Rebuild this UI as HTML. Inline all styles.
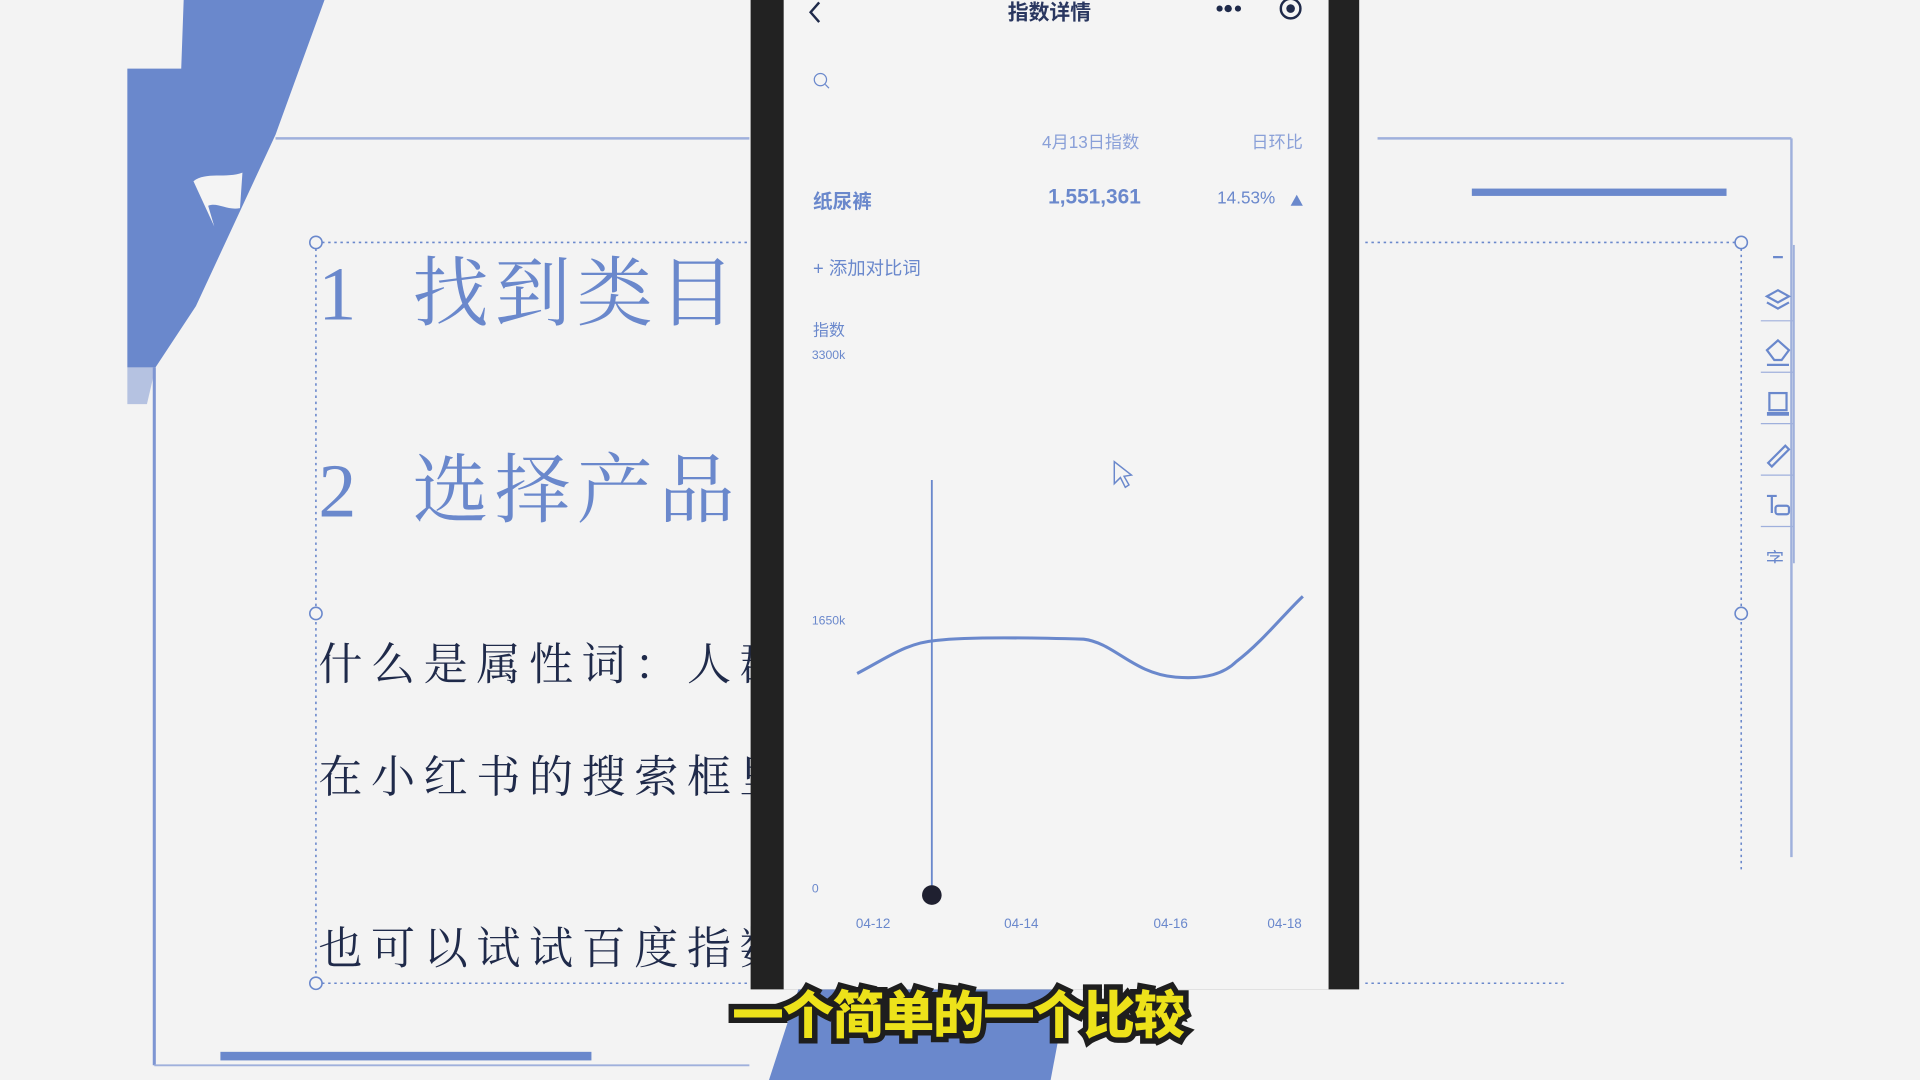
<!DOCTYPE html>
<html><head><meta charset="utf-8"><style>
html,body{margin:0;padding:0;width:1920px;height:1080px;overflow:hidden;background:#f3f3f3}
#w{position:absolute;left:0;top:0;width:1568px;height:882px;transform:scale(1.22449);transform-origin:0 0}
.t{position:absolute;white-space:nowrap;font-family:"Liberation Sans","Noto Sans CJK SC",sans-serif}
.big{font-family:"Liberation Serif","Noto Serif CJK SC",serif;color:#6a88cc;font-size:62px;letter-spacing:5px}
.mid{font-family:"Liberation Serif","Noto Serif CJK SC",serif;color:#1f2a4a;font-size:36px;letter-spacing:7px}
.ph{color:#6a88cc}
</style></head><body>
<div id="w">
<svg width="1568" height="882" style="position:absolute;left:0;top:0">
  <polygon points="150,0 265,0 225,110 160,250 127,300 104,300 104,56 148,56" fill="#6a88cc"/>
  <polygon points="104,300 127,300 120,330 104,330" fill="#6a88cc" opacity="0.45"/>
  <path d="M158,148 C168,140 185,146 198,141 L196,170 C185,172 178,165 170,168 L175,185 Z" fill="#f4f4f4"/>
  <line x1="225" y1="113" x2="612" y2="113" stroke="#9fb0dc" stroke-width="2"/>
  <line x1="126" y1="300" x2="126" y2="870" stroke="#7d95d2" stroke-width="2.5"/>
  <line x1="126" y1="870" x2="612" y2="870" stroke="#9fb0dc" stroke-width="1.5"/>
  <rect x="180" y="859" width="303" height="7" fill="#6a88cc"/>
  <line x1="1125" y1="113" x2="1463" y2="113" stroke="#9fb0dc" stroke-width="2"/>
  <line x1="1463" y1="113" x2="1463" y2="700" stroke="#9fb0dc" stroke-width="2"/>
  <rect x="1202" y="154" width="208" height="6" fill="#6a88cc"/>
  <g stroke="#6a88cc" stroke-width="1.3" stroke-dasharray="2,3" fill="none">
    <line x1="258" y1="198" x2="612" y2="198"/>
    <line x1="258" y1="198" x2="258" y2="803"/>
    <line x1="258" y1="803" x2="612" y2="803"/>
    <line x1="1115" y1="198" x2="1422" y2="198"/>
    <line x1="1422" y1="198" x2="1422" y2="710"/>
    <line x1="1115" y1="803" x2="1278" y2="803"/>
  </g>
  <g fill="#f4f4f4" stroke="#6a88cc" stroke-width="1.3">
    <circle cx="258" cy="198" r="5"/><circle cx="258" cy="501" r="5"/><circle cx="258" cy="803" r="5"/>
    <circle cx="1422" cy="198" r="5"/><circle cx="1422" cy="501" r="5"/>
  </g>
  <polygon points="652,808 872,808 858,882 628,882" fill="#6a88cc"/>
</svg>

<div class="t big" style="left:260px;top:190px">1&nbsp; 找到类目</div>
<div class="t big" style="left:260px;top:351px">2&nbsp; 选择产品</div>
<div class="t mid" style="left:260px;top:515px">什么是属性词：人群</div>
<div class="t mid" style="left:260px;top:607px">在小红书的搜索框里</div>
<div class="t mid" style="left:260px;top:747px">也可以试试百度指数</div>

<svg width="40" height="260" style="position:absolute;left:1435px;top:200px" fill="none" stroke="#6a88cc" stroke-width="1.8">
  <line x1="13" y1="10" x2="21" y2="10"/>
  <path d="M8,42 L17,37 L26,42 L17,47 Z M8,47 L17,52 L26,47"/>
  <path d="M17,78 L26,86 L20,94 L14,94 L8,86 Z M8,98 L26,98"/>
  <rect x="10" y="121" width="14" height="14"/><line x1="8" y1="138" x2="26" y2="138" stroke-width="3"/>
  <path d="M9,178 L23,164 L26,167 L12,181 Z"/>
  <path d="M8,205 L16,205 M12,205 L12,219"/><rect x="15" y="213" width="11" height="7" rx="2"/>
  <text x="7" y="262" font-size="15" fill="#6a88cc" stroke="none" font-family="Noto Sans CJK SC">字</text>
  <g stroke="#9fb0dc" stroke-width="1"><line x1="3" y1="62" x2="30" y2="62"/><line x1="3" y1="104" x2="30" y2="104"/><line x1="3" y1="146" x2="30" y2="146"/><line x1="3" y1="188" x2="30" y2="188"/><line x1="3" y1="230" x2="30" y2="230"/></g>
  <line x1="30" y1="0" x2="30" y2="300" stroke="#9fb0dc" stroke-width="1.5"/>
</svg>

<div style="position:absolute;left:613px;top:0;width:497px;height:808px;background:#222"></div>
<div style="position:absolute;left:640px;top:0;width:445px;height:808px;background:#f4f4f4"></div>
<svg width="445" height="808" style="position:absolute;left:640px;top:0">
  <path d="M29,2 L22,10 L29,18" stroke="#1f2a4a" stroke-width="2" fill="none"/>
  <circle cx="356" cy="7" r="2.5" fill="#1f2a4a"/><circle cx="363" cy="7" r="3" fill="#1f2a4a"/><circle cx="371" cy="7" r="2.5" fill="#1f2a4a"/>
  <circle cx="414" cy="7" r="8" stroke="#1f2a4a" stroke-width="2" fill="none"/><circle cx="414" cy="7" r="3.5" fill="#1f2a4a"/>
  <circle cx="30" cy="65" r="5" stroke="#6a88cc" stroke-width="1" fill="none"/><line x1="34" y1="69" x2="37" y2="72" stroke="#6a88cc"/>
  <path d="M414,168 L419,159 L424,168 Z" fill="#6a88cc"/>
  <line x1="121" y1="392" x2="121" y2="730" stroke="#6a88cc" stroke-width="1.5"/>
  <circle cx="121" cy="731" r="8" fill="#1f2030"/>
  <path d="M60,550 C85,537 100,525 125,523 C150,520 210,521 245,522 C270,525 285,550 320,553 C345,555 360,550 370,540 C390,525 410,500 424,487" stroke="#6a88cc" stroke-width="2.5" fill="none"/>
  <path d="M270,377 L270,395 L275,390 L279,398 L282,396 L278,389 L284,388 Z" fill="#f4f4f4" stroke="#6a88cc" stroke-width="1.2"/>
</svg>
<div class="t" style="left:823px;top:-4px;font-size:17px;font-weight:bold;color:#2a3760">指数详情</div>
<div class="t ph" style="left:851px;top:106px;font-size:14px;color:#8aa0d8">4月13日指数</div>
<div class="t ph" style="left:1022px;top:106px;font-size:14px;color:#8aa0d8">日环比</div>
<div class="t ph" style="left:664px;top:151px;font-size:16px;font-weight:bold">纸尿裤</div>
<div class="t ph" style="left:856px;top:151px;font-size:17px;font-weight:bold">1,551,361</div>
<div class="t ph" style="left:994px;top:153px;font-size:14px">14.53%</div>
<div class="t ph" style="left:664px;top:208px;font-size:15px">+ 添加对比词</div>
<div class="t ph" style="left:664px;top:259px;font-size:13px">指数</div>
<div class="t ph" style="left:663px;top:285px;font-size:10px">3300k</div>
<div class="t ph" style="left:663px;top:502px;font-size:10px">1650k</div>
<div class="t ph" style="left:663px;top:721px;font-size:10px">0</div>
<div class="t ph" style="left:699px;top:749px;font-size:11px">04-12</div>
<div class="t ph" style="left:820px;top:749px;font-size:11px">04-14</div>
<div class="t ph" style="left:942px;top:749px;font-size:11px">04-16</div>
<div class="t ph" style="left:1035px;top:749px;font-size:11px">04-18</div>

<div class="t" style="left:598px;top:796px;font-size:42px;font-weight:900;color:#ede21a;font-family:'Noto Sans CJK SC',sans-serif;-webkit-text-stroke:9px #1e1e1e;paint-order:stroke fill;letter-spacing:-1px">一个简单的一个比较</div>
</div>
</body></html>
